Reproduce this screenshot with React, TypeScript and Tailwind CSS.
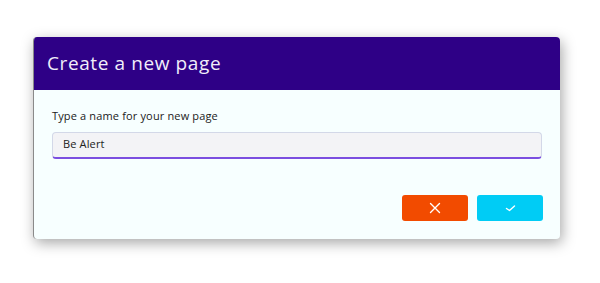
export default function App() {
  return (
    <div className="h-[283px] w-[600px] bg-white pl-[33px] pt-[37px] font-['Open_Sans',sans-serif]">
      <div className="w-[527px] overflow-hidden rounded-[4px] border-l border-[#8a8a8a] bg-[#f7ffff] shadow-[2px_4px_14px_rgba(0,0,0,0.35)]">
        <div className="flex h-[53px] items-center bg-[#2e0086] px-[13px]">
          <h1 className="text-[19px] font-normal tracking-[0.6px] text-[#f1eefa]">Create a new page</h1>
        </div>
        <div className="px-[18px] pt-[18px]">
          <label className="block text-[11px] tracking-[0.15px] text-[#222]">Type a name for your new page</label>
          <div className="mt-[7px] flex h-[27px] items-center rounded-[4px] border border-[#d3d8e8] border-b-2 border-b-[#7b4ee0] bg-[#f3f3f6] px-[10px] text-[11px] tracking-[0.15px] text-[#222]">
            Be Alert
          </div>
        </div>
        <div className="flex justify-end gap-[9px] px-[17px] pb-[18px] pt-[36px]">
          <button className="flex h-[26px] w-[66px] items-center justify-center rounded-[3px] bg-[#f24b00]">
            <svg width="12" height="12" viewBox="0 0 12 12" fill="none" stroke="#fff" strokeWidth="1.4" strokeLinecap="round">
              <path d="M1.5 1.5l9 9M10.5 1.5l-9 9" />
            </svg>
          </button>
          <button className="flex h-[26px] w-[66px] items-center justify-center rounded-[3px] bg-[#00ccf5]">
            <svg width="11" height="8" viewBox="0 0 11 8" fill="none" stroke="#fff" strokeWidth="1.4" strokeLinecap="round" strokeLinejoin="round">
              <path d="M1.5 4.5l3 2 5-4.5" />
            </svg>
          </button>
        </div>
      </div>
    </div>
  );
}
